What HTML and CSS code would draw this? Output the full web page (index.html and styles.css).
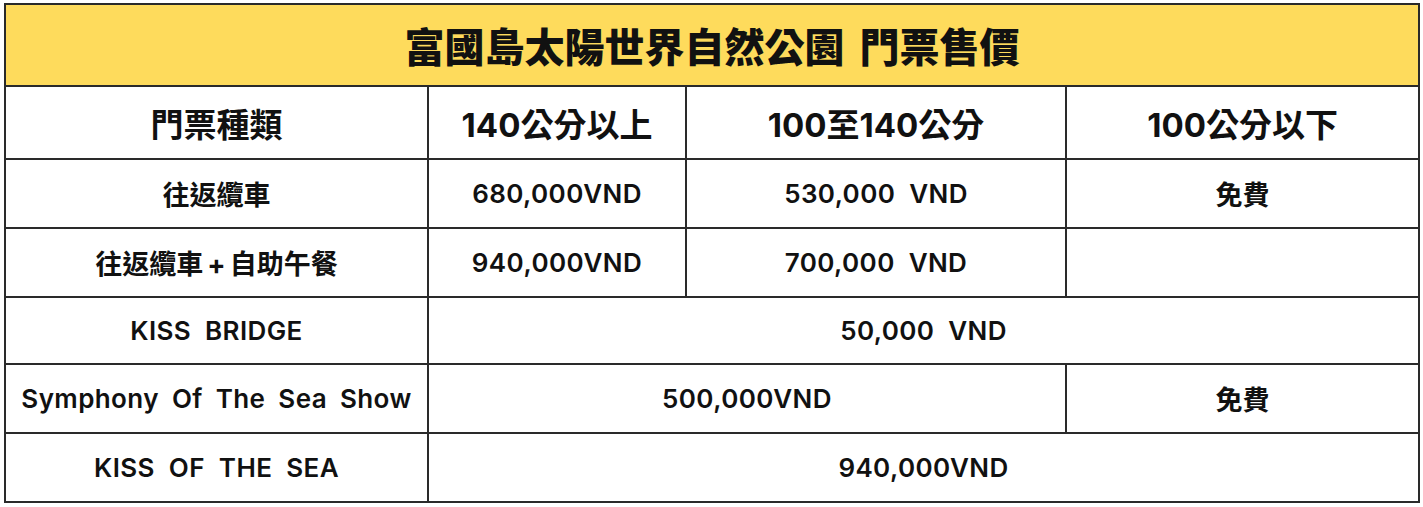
FILE: index.html
```html
<!DOCTYPE html>
<html lang="zh-Hant">
<head>
<meta charset="utf-8">
<title>富國島太陽世界自然公園 門票售價</title>
<link rel="stylesheet" href="styles.css">
</head>
<body>
<table class="price-table">
  <colgroup>
    <col class="c1"><col class="c2"><col class="c3"><col class="c4">
  </colgroup>
  <tr class="title-row"><th colspan="4">富國島太陽世界自然公園 門票售價</th></tr>
  <tr class="head-row">
    <th>門票種類</th><th>140公分以上</th><th>100至140公分</th><th>100公分以下</th>
  </tr>
  <tr><td class="zh">往返纜車</td><td>680,000VND</td><td>530,000 VND</td><td class="zh">免費</td></tr>
  <tr><td class="zh">往返纜車<span class="plus">+</span>自助午餐</td><td>940,000VND</td><td>700,000 VND</td><td></td></tr>
  <tr class="short"><td>KISS BRIDGE</td><td colspan="3">50,000 VND</td></tr>
  <tr><td class="sym">Symphony Of The Sea Show</td><td colspan="2">500,000VND</td><td class="zh">免費</td></tr>
  <tr><td>KISS OF THE SEA</td><td colspan="3">940,000VND</td></tr>
</table>
</body>
</html>
```
FILE: styles.css
```css
html, body {
  margin: 0;
  padding: 0;
  background: #ffffff;
}
body {
  padding: 3px 0 0 4px;
  font-family: "Inter", "Noto Sans CJK TC", sans-serif;
  color: #111111;
}
.price-table {
  border-collapse: collapse;
  width: 1414px;
  table-layout: fixed;
  border: 2px solid #2a2a2a;
}
.c1 { width: 423px; }
.c2 { width: 258px; }
.c3 { width: 380px; }
.c4 { width: 353px; }
.price-table th,
.price-table td {
  border: 2px solid #2a2a2a;
  text-align: center;
  vertical-align: middle;
  padding: 0;
}
.title-row th {
  background: #fedb5c;
  height: 80px;
  font-family: "Noto Sans CJK TC", sans-serif;
  font-weight: 900;
  font-size: 40px;
  word-spacing: 6px;
}
.head-row th {
  height: 71px;
  font-weight: 700;
  font-size: 33px;
}
.price-table td {
  height: 67px;
  font-size: 26px;
  font-weight: 600;
  letter-spacing: 0.4px;
  word-spacing: 7px;
}
.price-table td.sym {
  word-spacing: 6px;
}
.price-table td.zh {
  font-size: 27px;
  font-weight: 700;
  letter-spacing: 0;
}
.plus {
  margin: 0 4px;
}
.price-table tr.short td {
  height: 65px;
}
```
